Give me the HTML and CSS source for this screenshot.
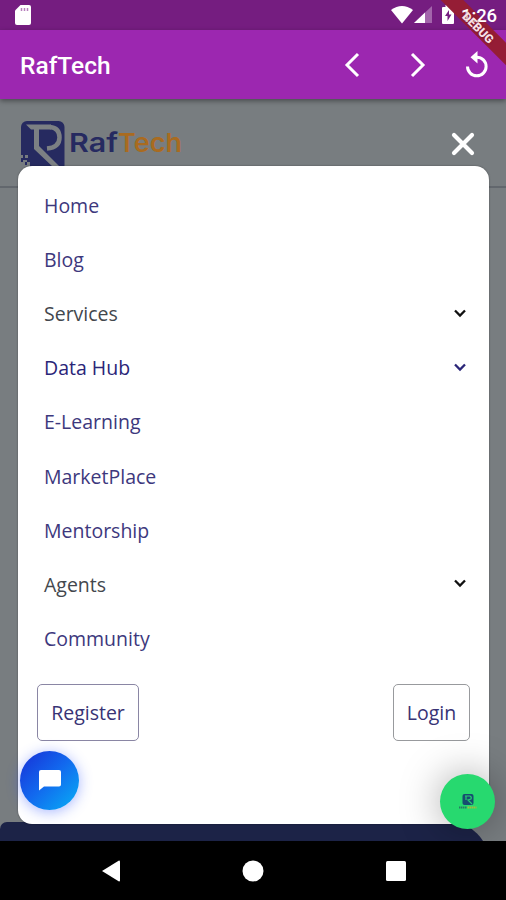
FILE: index.html
```html
<!DOCTYPE html>
<html lang="en">
<head>
<meta charset="utf-8">
<title>RafTech</title>
<link rel="stylesheet" href="styles.css">
</head>
<body>
<div class="phone">
  <header class="status">
    <svg class="sd" width="16" height="20" viewBox="0 0 16 20"><path d="M5.500 0H14Q16 0 16 2V18Q16 20 14 20H2Q0 20 0 18V5.500Z" fill="#fff"/><path d="M6.500 3v3M9.500 3v3M12.500 3v3" stroke="#b77fbd" stroke-width="1.500"/></svg>
    <div class="status-right">
      <svg class="wifi" width="24" height="19" viewBox="0 0 24 19"><path d="M1 5Q12-3 23 5L12 18.500Z" fill="#fff"/></svg>
      <svg class="signal" width="18" height="18" viewBox="0 0 18 18"><path d="M18 0V17H0Z" fill="#a365ab"/><path d="M11 6.500V17H0Z" fill="#fff"/></svg>
      <svg class="battery" width="12" height="19" viewBox="0 0 12 19"><path d="M3.500 0h5v2H11q1 0 1 1v15q0 1-1 1H1q-1 0-1-1V3q0-1 1-1h2.500z" fill="#fff"/><path d="M7 5L3 11h2.500v5L9.500 9.500H7z" fill="#751d80"/></svg>
      <span class="clock">1:26</span>
    </div>
  </header>
  <div class="appbar">
    <h1>RafTech</h1>
    <div class="actions">
      <svg width="16" height="26" viewBox="0 0 16 26"><path d="M14 2L3 13l11 11"/></svg>
      <svg width="16" height="26" viewBox="0 0 16 26"><path d="M2 2l11 11L2 24"/></svg>
      <svg width="24" height="28" viewBox="0 0 24 28"><path d="M2.500 15.500A9.300 9.300 0 1 0 11.800 6.200"/><path class="head" d="M12.500 0v12.500L5.500 6.200z"/></svg>
    </div>
  </div>
  <div class="ribbon"><div class="band"></div></div>
  <div class="ribbon ribbon-text"><span>DEBUG</span></div>
  <main class="page">
    <div class="site-head">
      <svg class="logo" width="164" height="46" viewBox="0 0 164 46">
        <rect x="0" y="0" width="43.500" height="50" rx="6" fill="#262a60"/>
        <path d="M5 3.500H30V8.500H10Z" fill="#7c8083"/>
        <path d="M29 6Q38.500 7 38.500 16.500Q38.500 26.500 26 27.500" fill="none" stroke="#7c8083" stroke-width="4.500"/>
        <path d="M13 8H18V25L39 46H32L13 28Z" fill="#7c8083"/>
        <path d="M0 34h2v3H0zM4 34h3v3H4zM2 39h4v2H2zM0 41h9v5H0z" fill="#777c80"/><path d="M4 41h2v3H4z" fill="#262a60"/>
        <text class="brand" x="48" y="31" textLength="49" lengthAdjust="spacingAndGlyphs" fill="#262a60">Raf</text>
        <text class="brand" x="97" y="31" textLength="64" lengthAdjust="spacingAndGlyphs" fill="#a96b20">Tech</text>
      </svg>
      <svg class="close" width="24" height="24" viewBox="0 0 24 24"><path d="M3 3l18 18M21 3L3 21"/></svg>
    </div>
    <div class="footer-edge"></div>
    <nav class="menu">
      <ul>
        <li>Home</li>
        <li>Blog</li>
        <li class="dark">Services<svg width="14" height="9" viewBox="0 0 14 9"><path d="M2 1.500l5 5 5-5"/></svg></li>
        <li class="blue">Data Hub<svg width="14" height="9" viewBox="0 0 14 9"><path d="M2 1.500l5 5 5-5"/></svg></li>
        <li>E-Learning</li>
        <li>MarketPlace</li>
        <li>Mentorship</li>
        <li class="dark">Agents<svg width="14" height="9" viewBox="0 0 14 9"><path d="M2 1.500l5 5 5-5"/></svg></li>
        <li>Community</li>
      </ul>
      <div class="buttons"><a class="register">Register</a><a class="login">Login</a></div>
    </nav>
    <div class="chat"><svg width="22" height="21" viewBox="0 0 22 21"><path d="M2 0h18q2 0 2 2v12.500q0 2-2 2H5L0 20.500V2q0-2 2-2z" fill="#fff"/></svg></div>
    <div class="contact"><svg width="20" height="18" viewBox="0 0 20 18"><rect x="4.500" y="1" width="11" height="11" rx="2" fill="#164d70"/><path d="M7 3h5q2 1 1 3l-3 1 4 4M8 3v4" fill="none" stroke="#25cf70" stroke-width="1.200"/><path d="M1 14.500h8" stroke="#247c62" stroke-width="2" stroke-dasharray="1.500 .5"/><path d="M9.500 14.500h9" stroke="#a7b93c" stroke-width="2" stroke-dasharray="1.500 .5"/></svg></div>
  </main>
  <footer class="navbar">
    <svg width="18" height="22" viewBox="0 0 18 22"><path d="M0 11L17 .5q1 0 1 1v19q0 1-1 1z"/></svg>
    <svg width="22" height="22" viewBox="0 0 22 22"><circle cx="11" cy="11" r="10.500"/></svg>
    <svg width="20" height="20" viewBox="0 0 20 20"><rect width="20" height="20" rx="1.500"/></svg>
  </footer>
</div>
</body>
</html>
```
FILE: styles.css
```css
* { box-sizing: border-box; }
body { margin: 0; }
svg { display: block; flex: none; }
.phone { position: relative; width: 506px; height: 900px; display: flex; flex-direction: column; overflow: hidden; background: #000; font-family: "Open Sans", sans-serif; }
.status { height: 30px; flex: none; display: flex; justify-content: space-between; padding: 5px 9px 0 15px; background: #751d80; }
.status-right { display: flex; align-items: flex-start; }
.signal { margin: 1px 10px 0 0; }
.battery { margin-right: 7px; }
.clock { position: relative; z-index: 4; font: 500 18.5px/22px Roboto, sans-serif; color: #fff; width: 36px; white-space: nowrap; letter-spacing: -.1px; }
.appbar { position: relative; z-index: 1; height: 69px; flex: none; display: flex; justify-content: space-between; align-items: center; padding: 1px 17px 0 20px; background: #9c27b0; box-shadow: 0 2px 5px rgba(0,0,0,.4); }
.appbar h1 { margin: 0; padding-top: 1px; font: 500 24.5px/30px Roboto, sans-serif; color: #fff; }
.actions { display: flex; align-items: center; gap: 39px; }
.actions svg:first-child { margin-right: 11px; }
.actions svg { margin-top: -1px; fill: none; stroke: #fff; stroke-width: 3; }
.actions .head { fill: #fff; stroke: none; }
.ribbon { position: absolute; z-index: 3; top: 0; right: 0; width: 70px; height: 70px; overflow: hidden; }
.ribbon-text { z-index: 5; }
.band, .ribbon span { position: absolute; left: -18px; top: 18px; width: 120px; height: 16px; transform: rotate(45deg); }
.band { background: #951d35; }
.ribbon span { top: 20px; color: #f8dfe5; font: 900 12px/16px Roboto, sans-serif; text-align: center; text-shadow: 0 0 2px #661528; }
.page { position: relative; height: 742px; flex: none; padding: 67px 17px 0 18px; background: #787d80; overflow: hidden; }
.site-head { position: absolute; inset: 0 0 auto; height: 89px; display: flex; justify-content: space-between; padding: 22px 31px 0 21px; border-bottom: 2px solid #62676d; }
.brand { font: 600 26px "Inter", sans-serif; }
.close { margin-top: 11px; fill: none; stroke: #fff; stroke-width: 4.2; stroke-linecap: round; }
.footer-edge { position: absolute; left: 0; bottom: -21px; width: 489px; height: 40px; border-radius: 7px 40px 0 0; background: #1c2347; }
.menu { position: relative; height: 658px; border-radius: 14px; background: #fff; padding: 13px 19px; box-shadow: 0 0 2px rgba(0,0,0,.4); }
.menu ul { list-style: none; margin: 0; padding: 0 3px 0 7px; }
.menu li { height: 54.1px; display: flex; align-items: center; justify-content: space-between; font-size: 19.5px; line-height: 28px; color: #3d387d; }
.menu li svg { fill: none; stroke: currentColor; stroke-width: 2.3; margin-top: -2px; }
.menu .dark { color: #43474d; }
.menu .dark svg { stroke: #111; }
.menu .blue { color: #2a2578; }
.buttons { display: flex; justify-content: space-between; margin-top: 18px; }
.buttons a { height: 57px; border: 1px solid #8a86a4; border-radius: 5px; display: flex; align-items: center; justify-content: center; font-size: 19.5px; color: #383375; }
.buttons .register { width: 102px; }
.buttons .login { width: 77px; border-color: #989a9d; }
.chat { position: absolute; left: 20px; top: 652px; width: 59px; height: 59px; border-radius: 50%; display: grid; place-items: center; background: linear-gradient(135deg, #1735d8 5%, #1268ee 48%, #08a9f5 95%); box-shadow: 0 2px 14px rgba(45,80,255,.42); }
.contact { position: absolute; left: 440px; top: 675px; width: 55px; height: 55px; border-radius: 50%; display: grid; place-items: center; background: #27d96f; box-shadow: 0 0 40px rgba(0,0,0,.35); }
.navbar { height: 59px; flex: none; display: flex; align-items: center; justify-content: space-between; padding: 0 100px 0 102px; background: #000; }
.navbar svg { fill: #fff; }
```
